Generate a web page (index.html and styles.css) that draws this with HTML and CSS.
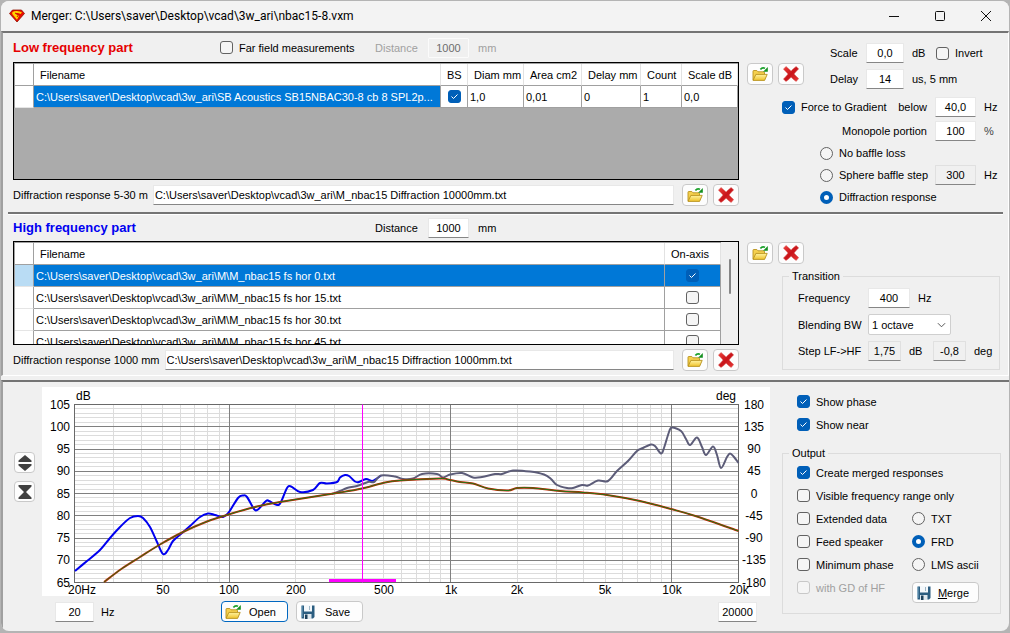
FILE: index.html
```html
<!DOCTYPE html>
<html lang="en">
<head>
<meta charset="utf-8">
<title>Merger</title>
<link rel="stylesheet" href="styles.css">
</head>
<body>
<svg class="sprite" aria-hidden="true">
  <defs>
    <linearGradient id="gold" x1="0" y1="0" x2="0" y2="1"><stop offset="0" stop-color="#fff3a0"/><stop offset="1" stop-color="#efc22c"/></linearGradient>
    <linearGradient id="red" x1="0" y1="0" x2="1" y2="1"><stop offset="0" stop-color="#f0403c"/><stop offset="0.5" stop-color="#c8141a"/><stop offset="1" stop-color="#e83a38"/></linearGradient>
    <symbol id="i-folder" viewBox="0 0 16 16">
      <path d="M1 14V5.2q0-.7.7-.7h3.1l1.2 1.3h5.800q.7 0 .7.7V8.400" fill="#f5d04e" stroke="#b8921e" stroke-width=".9"/>
      <path d="M1 14.4 3.900 8.400h11.300l-2.600 6z" fill="url(#gold)" stroke="#b8921e" stroke-width=".9" stroke-linejoin="round"/>
      <path d="M8.400 3.400Q10.200 .900 13 2.200" fill="none" stroke="#18a028" stroke-width="1.700"/>
      <path d="M15.800 1v4.700h-4.700z" fill="#149020"/>
    </symbol>
    <symbol id="i-cross" viewBox="0 0 16 16">
      <path d="M3 .4Q5.600 2.600 8.100 4.900 10.600 2.200 13.200 .4L15.700 3Q13 5.200 11.100 8q2.200 2.500 4.600 4.600l-2.500 2.900q-2.700-1.800-5.100-4.300-2.500 2.600-5.200 4.400L.4 12.900q2.700-2.200 4.600-4.800Q3 5.500 .4 3.200z" fill="url(#red)" stroke="#d8605c" stroke-width=".5"/>
    </symbol>
    <symbol id="i-disk" viewBox="0 0 16 16">
      <path d="M1.500 1.500h13v11.500l-1.500 1.500H1.500z" fill="#2b5d80"/>
      <path d="M4 1h8v6.500H4z" fill="#f4f8fb"/>
      <path d="M4 10h7.500v5H4z" fill="#dfe8ee"/>
      <path d="M5 10.500h2.500V15H5z" fill="#1b3f5a"/>
      <path d="M2 2v11" stroke="#78a8c4" stroke-width="1"/>
      <path d="M9.500 2v4" stroke="#9db6c6" stroke-width="1"/>
    </symbol>
  </defs>
</svg>

<main class="window">
  <header class="titlebar">
    <svg class="gem" viewBox="0 0 16 14"><path d="M3.500 1h9L15.500 4.500 8 13 .5 4.500z" fill="#e80c00" stroke="#8e1200" stroke-width=".8"/><path d="M3.300 3.200Q5 1.900 8 2.100t5 1.300L11.500 5Q10 3.900 8 4T6.500 5l3.700 1.600L8 10.800 3.200 5z" fill="#ffd400"/><path d="m6 4 3.500 1.800L8 8" fill="none" stroke="#d01000"/></svg>
    <h1 class="title">Merger: C:\Users\saver\Desktop\vcad\3w_ari\nbac15-8.vxm</h1>
    <button class="caption" aria-label="Minimize"><svg viewBox="0 0 12 12"><path d="M1 6.500h10"/></svg></button>
    <button class="caption" aria-label="Maximize"><svg viewBox="0 0 12 12"><rect x="1.500" y="1.500" width="9" height="9" rx="1"/></svg></button>
    <button class="caption" aria-label="Close"><svg viewBox="0 0 12 12"><path d="m1 1 10 10M11 1 1 11"/></svg></button>
  </header>

  <section class="upper">
    <section class="part">
      <div class="main">
        <div class="part-head">
          <h2 class="heading low">Low frequency part</h2>
          <label class="opt"><input type="checkbox">Far field measurements</label>
          <label class="dim" for="lf-dist">Distance</label>
          <input class="field" id="lf-dist" value="1000" disabled>
          <span class="dim unit">mm</span>
        </div>
        <div class="grid-box low-box">
          <table class="files">
            <colgroup><col class="c-head"><col><col class="c-bs"><col class="c-diam"><col class="c-area"><col class="c-delay"><col class="c-count"><col class="c-scale"></colgroup>
            <thead><tr><th></th><th>Filename</th><th>BS</th><th>Diam mm</th><th>Area cm2</th><th>Delay mm</th><th>Count</th><th>Scale dB</th></tr></thead>
            <tbody><tr><td></td><td class="sel">C:\Users\saver\Desktop\vcad\3w_ari\SB Acoustics SB15NBAC30-8 cb 8 SPL2p...</td><td class="tick"><input type="checkbox" checked aria-label="BS"></td><td>1,0</td><td>0,01</td><td>0</td><td>1</td><td>0,0</td></tr></tbody>
          </table>
        </div>
        <div class="path-row">
          <label for="lf-diff">Diffraction response 5-30 m</label>
          <input class="path" id="lf-diff" value="C:\Users\saver\Desktop\vcad\3w_ari\M_nbac15 Diffraction 10000mm.txt">
          <button class="tool" aria-label="Open"><svg><use href="#i-folder"/></svg></button>
          <button class="tool" aria-label="Remove"><svg><use href="#i-cross"/></svg></button>
        </div>
      </div>
      <div class="side">
        <div class="side-top">
          <div class="tools low-tools">
            <button class="tool" aria-label="Add file"><svg><use href="#i-folder"/></svg></button>
            <button class="tool" aria-label="Delete file"><svg><use href="#i-cross"/></svg></button>
          </div>
          <div class="scale">
            <label for="scale">Scale</label><input class="field" id="scale" value="0,0"><span>dB</span>
            <label class="opt"><input type="checkbox">Invert</label>
            <label for="delay">Delay</label><input class="field" id="delay" value="14"><span class="wide">us, 5 mm</span>
          </div>
        </div>
        <div class="gradient">
          <label class="opt"><input type="checkbox" checked>Force to Gradient</label>
          <label class="end" for="below">below</label><input class="field" id="below" value="40,0"><span>Hz</span>
          <label class="end both" for="mono">Monopole portion</label><input class="field" id="mono" value="100"><span class="percent">%</span>
        </div>
        <div class="baffle">
          <label class="opt"><input type="radio" name="baffle">No baffle loss</label>
          <label class="opt start"><input type="radio" name="baffle">Sphere baffle step</label><input class="field" value="300" aria-label="Sphere frequency" readonly><span>Hz</span>
          <label class="opt start"><input type="radio" name="baffle" checked>Diffraction response</label>
        </div>
      </div>
    </section>

    <hr class="rule">

    <section class="part high-part">
      <div class="main">
        <div class="part-head">
          <h2 class="heading high">High frequency part</h2>
          <span></span>
          <label for="hf-dist">Distance</label>
          <input class="field" id="hf-dist" value="1000">
          <span class="unit">mm</span>
        </div>
        <div class="grid-box high-box">
          <table class="files">
            <colgroup><col class="c-head"><col><col class="c-axis"></colgroup>
            <thead><tr><th></th><th>Filename</th><th>On-axis</th></tr></thead>
            <tbody>
              <tr class="current"><td></td><td class="sel">C:\Users\saver\Desktop\vcad\3w_ari\M\M_nbac15 fs hor 0.txt</td><td class="tick sel"><input type="checkbox" checked aria-label="On-axis 0"></td></tr>
              <tr><td></td><td>C:\Users\saver\Desktop\vcad\3w_ari\M\M_nbac15 fs hor 15.txt</td><td class="tick"><input type="checkbox" aria-label="On-axis 15"></td></tr>
              <tr><td></td><td>C:\Users\saver\Desktop\vcad\3w_ari\M\M_nbac15 fs hor 30.txt</td><td class="tick"><input type="checkbox" aria-label="On-axis 30"></td></tr>
              <tr><td></td><td>C:\Users\saver\Desktop\vcad\3w_ari\M\M_nbac15 fs hor 45.txt</td><td class="tick"><input type="checkbox" aria-label="On-axis 45"></td></tr>
            </tbody>
          </table>
          <div class="scroll"><div class="thumb"></div></div>
        </div>
        <div class="path-row">
          <label for="hf-diff">Diffraction response 1000 mm</label>
          <input class="path" id="hf-diff" value="C:\Users\saver\Desktop\vcad\3w_ari\M_nbac15 Diffraction 1000mm.txt">
          <button class="tool" aria-label="Open"><svg><use href="#i-folder"/></svg></button>
          <button class="tool" aria-label="Remove"><svg><use href="#i-cross"/></svg></button>
        </div>
      </div>
      <div class="side">
        <div class="tools high-tools">
          <button class="tool" aria-label="Add file"><svg><use href="#i-folder"/></svg></button>
          <button class="tool" aria-label="Delete file"><svg><use href="#i-cross"/></svg></button>
        </div>
        <fieldset class="group">
          <legend>Transition</legend>
          <div class="transition">
            <label for="freq">Frequency</label>
            <div class="line"><input class="field mid" id="freq" value="400"><span>Hz</span></div>
            <label for="bw">Blending BW</label>
            <div class="line"><select class="combo" id="bw"><option>1 octave</option></select></div>
            <label for="step">Step LF-&gt;HF</label>
            <div class="line"><input class="field small" id="step" value="1,75" readonly><span class="db">dB</span><input class="field small" value="-0,8" aria-label="Phase step" readonly><span>deg</span></div>
          </div>
        </fieldset>
      </div>
    </section>
  </section>

  <section class="lower">
    <div class="zoomers">
      <button class="tool square" aria-label="Expand scale"><svg viewBox="0 0 14 16"><path d="M7 0l6.500 5.500v1.500H.5V5.500zM7 16l6.500-5.500V9H.5v1.500z" fill="#404040"/></svg></button>
      <button class="tool square" aria-label="Compress scale"><svg viewBox="0 0 14 16"><path d="M.5 1h13v1.500L8 8l5.500 5.500V15H.5v-1.500L6 8 .5 2.500z" fill="#404040"/></svg></button>
    </div>
    <div class="plot-col">
      <svg class="plot" id="plot" viewBox="42 387 728 209" role="img" aria-label="Frequency response"></svg>
      <div class="plot-foot">
        <input class="field range" id="fmin" value="20" aria-label="Lowest frequency"><label for="fmin">Hz</label>
        <button class="push primary open"><svg><use href="#i-folder"/></svg><span>Open</span></button>
        <button class="push"><svg><use href="#i-disk"/></svg><span>Save</span></button>
        <input class="field range last" value="20000" aria-label="Highest frequency">
      </div>
    </div>
    <div class="output-col">
      <label class="opt"><input type="checkbox" checked>Show phase</label>
      <label class="opt"><input type="checkbox" checked>Show near</label>
      <fieldset class="group output">
        <legend>Output</legend>
        <div class="choices">
          <label class="opt full"><input type="checkbox" checked>Create merged responses</label>
          <label class="opt full"><input type="checkbox">Visible frequency range only</label>
          <label class="opt"><input type="checkbox">Extended data</label><label class="opt"><input type="radio" name="fmt">TXT</label>
          <label class="opt"><input type="checkbox">Feed speaker</label><label class="opt"><input type="radio" name="fmt" checked>FRD</label>
          <label class="opt"><input type="checkbox">Minimum phase</label><label class="opt"><input type="radio" name="fmt">LMS ascii</label>
          <label class="opt dim"><input type="checkbox" disabled>with GD of HF</label>
          <button class="push merge"><svg><use href="#i-disk"/></svg><span><u>M</u>erge</span></button>
        </div>
      </fieldset>
    </div>
  </section>
</main>
<script src="plot.js"></script>
</body>
</html>
```
FILE: styles.css
```css
* { box-sizing: border-box; }

body {
  margin: 0;
  padding: 1px 1px 2px;
  min-height: 100vh;
  display: flex;
  background: #b4b4b4;
  color: #000;
  font: 11px/14px "Liberation Sans", Arial, sans-serif;
}

input, button, select { font: inherit; color: inherit; margin: 0; }
.sprite { position: absolute; width: 0; height: 0; }

.window {
  flex: 1;
  display: flex;
  flex-direction: column;
  background: #f0f0f0;
  border-radius: 8px;
  overflow: hidden;
}

.titlebar {
  display: flex;
  align-items: center;
  height: 30px;
  padding-left: 8px;
  background: #f3f3f3;
}
.gem { width: 16px; height: 14px; margin-right: 6px; }
.title { flex: 1; margin: 0; font: 12px/16px Roboto, "Noto Sans", sans-serif; }
.caption { width: 46px; height: 28px; padding: 0; border: 0; background: none; }
.caption svg { width: 12px; height: 12px; display: block; margin: auto; fill: none; stroke: #111; }

.upper {
  border-top: 2px solid #747474;
  border-left: 2px solid #a0a0a0;
  border-right: 1px solid #fff;
  border-bottom: 1px solid #fff;
  padding: 0 5px 0 10px;
}
.part { display: flex; gap: 8px; }
.main { flex: 1; min-width: 0; }
.side { width: 256px; }

.part-head {
  display: grid;
  grid-template-columns: 207px 155px 53px 41px auto;
  align-items: center;
  height: 29px;
}
.heading { margin: 0; font-size: 13px; line-height: 16px; }
.low { color: #e60000; }
.high { color: #0000f0; }
.unit { padding-left: 9px; }
.dim { color: #a0a0a0; }

.opt { display: flex; align-items: center; gap: 6px; white-space: nowrap; }
input[type="checkbox"], input[type="radio"] {
  appearance: none;
  flex: none;
  width: 13px;
  height: 13px;
  border: 1px solid #626262;
  border-radius: 3px;
  background: #f5f5f5;
}
input[type="radio"] { border-radius: 50%; }
input[type="checkbox"]:checked {
  border-color: #005fb8;
  background: #005fb8 url("data:image/svg+xml,%3Csvg xmlns='http://www.w3.org/2000/svg' viewBox='0 0 11 11'%3E%3Cpath d='M2.500 5.500l2 2 4-4' fill='none' stroke='white'/%3E%3C/svg%3E");
}
input[type="radio"]:checked { border: 4px solid #005fb8; background: #fff; }
input[type="checkbox"]:disabled { border-color: #c8c8c8; }

.field {
  width: 100%;
  height: 20px;
  padding: 0;
  text-align: center;
  background: #fff;
  border: 1px solid #e8e8e8;
  border-bottom-color: #868686;
  border-radius: 1px;
}
.field:read-only { background: #f0f0f0; border-color: #e0e0e0 #e0e0e0 #868686; }
.field:disabled { background: #f0f0f0; color: #6d6d6d; border-color: #fbfbfb; }

.grid-box { display: flex; border: 1px solid #000; background: #ababab; overflow: hidden; }
.low-box { height: 118px; }
.high-box { height: 104px; background: #fff; }
.files { flex: 1; width: 100%; align-self: flex-start; table-layout: fixed; border-collapse: separate; border-spacing: 0; border-top: 1px solid #a0a0a0; border-left: 1px solid #a0a0a0; }
.files th, .files td {
  height: 22px;
  padding: 0 2px;
  border-right: 1px solid #a0a0a0;
  border-bottom: 1px solid #a0a0a0;
  background: #fff;
  text-align: left;
  font-weight: normal;
  white-space: nowrap;
  overflow: hidden;
}
.files th { padding-left: 6px; padding-right: 0; border-right-color: #e2e2e2; }
.files th:first-child { border-right-color: #a0a0a0; }
.files td:first-child { border-bottom-color: #e5e5e5; }
.files .sel { background: #0078d7; color: #fff; }
.files .current td:first-child { background: #b9dcf4; }
.files .tick { text-align: center; padding: 0; }
.tick input { display: block; margin: 0 auto; }
.c-head { width: 19px; }
.c-bs { width: 27px; }
.c-diam { width: 56px; }
.c-area { width: 58px; }
.c-delay { width: 59px; }
.c-count { width: 41px; }
.c-scale { width: 56px; }
.c-axis { width: 56px; }
.scroll { width: 17px; padding: 17px 7px 0 8px; background: #f0f0f0; }
.thumb { height: 35px; background: #868686; border-radius: 1px; }

.path-row { display: flex; align-items: center; gap: 5px; height: 30px; }
.path {
  flex: 1;
  min-width: 0;
  height: 20px;
  margin-right: 3px;
  padding: 0 1px;
  background: #fff;
  border: 1px solid #e8e8e8;
  border-bottom-color: #868686;
}

.tools { display: flex; gap: 5px; }
.tool, .push {
  display: flex;
  align-items: center;
  justify-content: center;
  background: #fdfdfd;
  border: 1px solid #c9c9c9;
  border-radius: 4px;
  padding: 0;
}
.tool { width: 26px; height: 22px; }
.tool svg { width: 16px; height: 16px; }
.square { width: 21px; height: 21px; }

.side-top { display: flex; gap: 26px; }
.low-tools { margin-top: 30px; align-self: flex-start; }
.scale {
  flex: 1;
  display: grid;
  grid-template-columns: 36px 38px 32px auto;
  grid-auto-rows: 20px;
  row-gap: 6px;
  align-items: center;
  padding-top: 10px;
}
.scale span { padding-left: 8px; }
.scale .wide { grid-column: span 2; }
.gradient {
  display: grid;
  grid-template-columns: 1fr auto 41px 19px;
  grid-auto-rows: 20px;
  gap: 4px 8px;
  align-items: center;
  padding: 8px 0 0 35px;
}
.both { grid-column: span 2; }
.end { text-align: right; }
.baffle {
  display: grid;
  grid-template-columns: minmax(0, 1fr) 41px 19px;
  grid-auto-rows: 22px;
  column-gap: 8px;
  align-items: center;
  padding: 1px 0 0 73px;
}
.baffle .start { grid-column: 1; }
.percent { color: #444; }

.rule { height: 3px; margin: 2px 0 0 -5px; border: 0; border-top: 2px solid #747474; border-bottom: 1px solid #fff; }
.high-part .part-head { height: 26px; }
.high-tools { margin-top: 27px; }

.group { margin: 5px 3px 0 35px; padding: 0; border: 1px solid #dcdcdc; min-width: 0; }
.group legend { margin-left: 6px; padding: 0 3px; }
.transition {
  display: grid;
  grid-template-columns: 70px 1fr;
  row-gap: 6px;
  align-items: center;
  padding: 5px 4px 8px 15px;
}
.line { display: flex; align-items: center; gap: 8px; }
.mid { width: 42px; }
.small { width: 33px; }
.db { width: 16px; }
.combo { width: 83px; height: 21px; padding: 0 3px; appearance: none; border: 1px solid #cfcfcf; border-radius: 2px;
  background: #fff url("data:image/svg+xml,%3Csvg xmlns='http://www.w3.org/2000/svg' viewBox='0 0 10 6'%3E%3Cpath d='M1 1l4 4 4-4' fill='none' stroke='%23444'/%3E%3C/svg%3E") no-repeat right 4px center / 9px 6px; }

.lower {
  flex: 1;
  display: flex;
  margin-top: 4px;
  border-top: 2px solid #747474;
  border-left: 2px solid #a0a0a0;
  padding: 5px 8px 8px 11px;
}
.zoomers { display: flex; flex-direction: column; gap: 8px; width: 28px; padding-top: 65px; }
.plot-col { flex: 1; min-width: 0; }
.plot { display: block; width: 100%; background: #fff; }
.plot text { font: 12px "Liberation Sans", Arial, sans-serif; }
.plot .end-text { text-anchor: end; }
.plot .mid-text { text-anchor: middle; }
.minor { stroke: #dcdcdc; }
.major { stroke: #808080; }
.frame { fill: none; stroke: #696969; }
.curve { fill: none; stroke-width: 2; stroke-linejoin: round; }
.blue { stroke: #0000f0; }
.grey { stroke: #5c5c78; }
.red { stroke: #d02000; }
.green { stroke: #207818; stroke-width: 1; }
.cursor { stroke: #ff00ff; }
.band { fill: #ff00ff; }

.plot-foot { display: flex; align-items: center; padding: 5px 13px 0 13px; }
.plot-foot label { width: 121px; padding-left: 7px; }
.range { width: 39px; }
.last { margin-left: auto; }
.push { width: 67px; height: 21px; justify-content: flex-start; padding: 0 3px; }
.push svg { width: 16px; height: 16px; flex: none; }
.push span { flex: 1; text-align: center; }
.open { margin: 0 8px 0 6px; }
.primary { border-color: #0067c0; }

.output-col { width: 231px; padding: 3px 0 0 12px; }
.output-col > .opt { height: 23px; padding-left: 15px; }
.output { margin: 10px 0 0; }
.choices {
  display: grid;
  grid-template-columns: 115px 1fr;
  grid-auto-rows: 23px;
  align-items: center;
  padding: 1px 10px 14px 14px;
}
.full { grid-column: span 2; }
.merge { margin-top: 10px; }
```
FILE: plot.js
```javascript
const NS = "http://www.w3.org/2000/svg";
const plot = document.getElementById("plot");
const box = { left: 74.5, right: 738.5, top: 404.5, bottom: 582.5 };

function add(name, attrs, text) {
  const el = document.createElementNS(NS, name);
  for (const key in attrs) el.setAttribute(key, attrs[key]);
  if (text !== undefined) el.textContent = text;
  plot.appendChild(el);
}
const snap = v => Math.floor(v) + 0.5;
const fx = f => box.left + Math.log10(f / 20) / 3 * (box.right - box.left);
const dy = d => box.bottom - (d - 65) / 40 * (box.bottom - box.top);
const hline = (y, cls) => add("line", { x1: box.left, x2: box.right, y1: y, y2: y, class: cls });
const vline = (x, cls) => add("line", { x1: x, x2: x, y1: box.top, y2: box.bottom, class: cls });

for (let d = 65; d <= 105; d++) if (d % 5) hline(snap(dy(d)), "minor");
for (const decade of [10, 100, 1000, 10000])
  for (let n = 2; n < 10; n++) {
    const f = n * decade;
    if (f > 20 && f < 20000) vline(snap(fx(f)), "minor");
  }
for (let d = 70; d < 105; d += 5) hline(snap(dy(d)), "major");
for (const f of [100, 1000, 10000]) vline(snap(fx(f)), "major");
add("rect", { x: box.left, y: box.top, width: box.right - box.left, height: box.bottom - box.top, class: "frame" });

// Catmull-Rom spline through a flat list of x,y pairs
function curve(list, cls) {
  const p = [];
  for (let i = 0; i < list.length; i += 2) p.push([list[i], list[i + 1]]);
  let d = "M" + p[0];
  for (let i = 0; i < p.length - 1; i++) {
    const a = p[i - 1] || p[i], b = p[i], c = p[i + 1], e = p[i + 2] || c;
    d += "C" + [b[0] + (c[0] - a[0]) / 6, b[1] + (c[1] - a[1]) / 6, c[0] - (e[0] - b[0]) / 6, c[1] - (e[1] - b[1]) / 6, c[0], c[1]];
  }
  add("path", { d, class: "curve " + cls });
}

const near = [75,571, 87,561, 100,550, 110,538, 120,527, 130,518, 138,516, 143,518, 150,527, 157,542, 163,554, 168,550, 173,541, 182,533, 190,526, 200,517, 208,513.5, 215,515, 223,517, 229,512, 238,498, 243,495.5, 247,497, 254,509, 258,509.5, 266,501, 269,501, 277,505, 281,502, 287,488, 291,486.5, 300,492, 313,490, 320,483, 327,483.5, 337,482, 340,477.5, 345,475, 349,476, 355,481.5, 359,482, 366,479, 372,481, 376,479, 381,475.5];
const merged = [332,494, 340,491, 347,488, 357,486, 368,482, 374,482, 381,475.5, 395,476.5, 403,479, 413,478.5, 422,474, 437,474, 443,477.5, 450,474.5, 462,473, 473,477.5, 482,477, 495,474, 502,474, 513,470.5, 530,471.5, 544,474.5, 551,479, 557,485, 567,488, 573,488, 582,485, 588,485.5, 598,480.5, 608,481, 617,471, 628,461, 637,451, 643,448, 651,444.5, 655,446, 661,453.5, 664,448, 669,432, 672,427.5, 681,431, 686,439, 690,445, 697,437.5, 702,447, 706,455, 713,446.5, 717,455, 721,468, 727,457, 730,453.5, 734,457, 738.5,463];
const target = [104,582, 122,568.5, 140,557, 160,544.5, 182,532.5, 207,521.5, 230,514, 257,506.5, 280,502, 340,492.5, 362,488.5, 383,483, 400,480.5, 440,478.5, 448,479.5, 460,482, 473,483.5, 488,488.5, 508,490.5, 517,488, 533,488, 560,491, 583,492.5, 607,495, 640,501, 671,509, 697,516.5, 738.5,531];
curve(near, "blue");
curve(merged, "grey");
curve(target, "red");
curve(target, "green");

add("rect", { x: 329, y: 579, width: 67, height: 3, class: "band" });
vline(362.5, "cursor");

for (let i = 0; i <= 8; i++) {
  const y = dy(105 - i * 5) + 4;
  add("text", { x: 70, y, class: "end-text" }, 105 - i * 5);
  add("text", { x: 754, y, class: "mid-text" }, 180 - i * 45);
}
add("text", { x: 76, y: 400 }, "dB");
add("text", { x: 736, y: 400, class: "end-text" }, "deg");
add("text", { x: 68, y: 594 }, "20Hz");
const marks = { 50: "50", 100: "100", 200: "200", 500: "500", 1000: "1k", 2000: "2k", 5000: "5k", 10000: "10k", 20000: "20k" };
for (const f in marks) add("text", { x: Math.round(fx(f)), y: 594, class: "mid-text" }, marks[f]);
```
